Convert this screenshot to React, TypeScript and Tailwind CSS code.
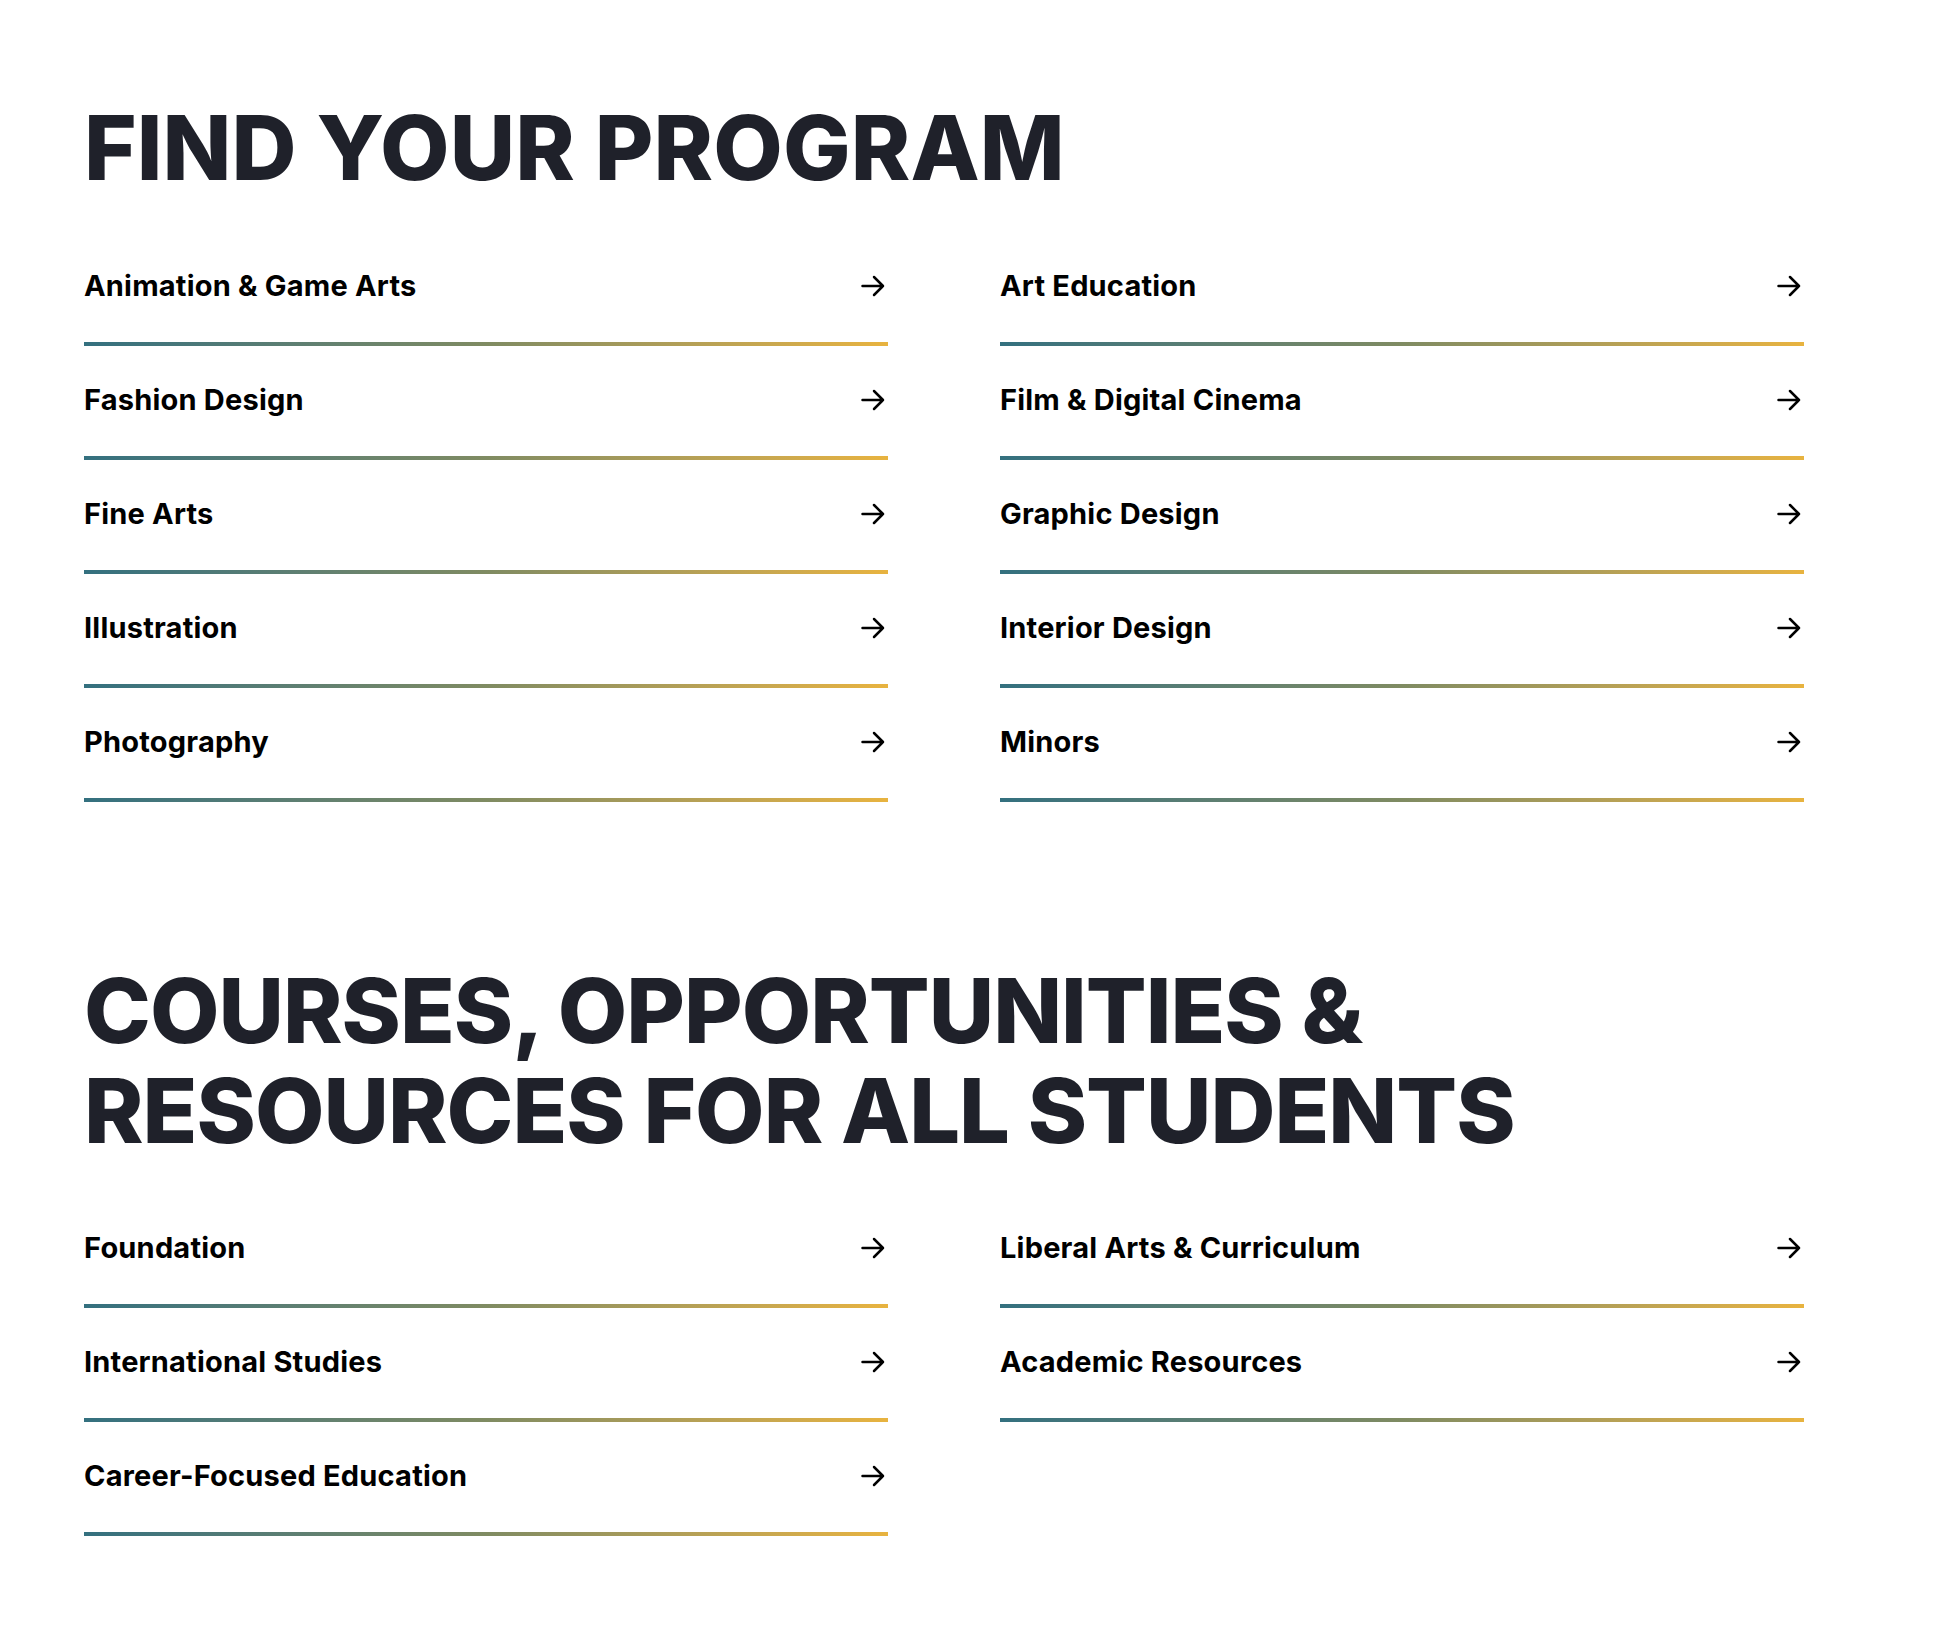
import React from 'react';

type Item = { label: string; href: string };

const programs: Item[] = [
  { label: 'Animation & Game Arts', href: '#' },
  { label: 'Art Education', href: '#' },
  { label: 'Fashion Design', href: '#' },
  { label: 'Film & Digital Cinema', href: '#' },
  { label: 'Fine Arts', href: '#' },
  { label: 'Graphic Design', href: '#' },
  { label: 'Illustration', href: '#' },
  { label: 'Interior Design', href: '#' },
  { label: 'Photography', href: '#' },
  { label: 'Minors', href: '#' },
];

const resources: Item[] = [
  { label: 'Foundation', href: '#' },
  { label: 'Liberal Arts & Curriculum', href: '#' },
  { label: 'International Studies', href: '#' },
  { label: 'Academic Resources', href: '#' },
  { label: 'Career-Focused Education', href: '#' },
];

const Arrow = () => (
  <svg width="24" height="22" viewBox="0 0 24 22" fill="none" className="shrink-0">
    <path
      d="M1.5 11H22M13 2l9 9-9 9"
      stroke="#000"
      strokeWidth="2.5"
      strokeLinecap="round"
      strokeLinejoin="round"
    />
  </svg>
);

const LinkRow = ({ item }: { item: Item }) => (
  <a href={item.href} className="flex flex-col group">
    <div className="flex h-[110px] items-center justify-between pb-[3px] pr-[3px]">
      <span className="text-[29px] font-bold tracking-[0.2px] text-black">{item.label}</span>
      <Arrow />
    </div>
    {/* gradient rule under each link */}
    <div className="h-[4px] w-full bg-gradient-to-r from-[#33707f] via-[#7f8b62] to-[#e8b33f]" />
  </a>
);

const Section = ({ title, items, headingClass }: { title: React.ReactNode; items: Item[]; headingClass: string }) => (
  <section>
    <h2 className={headingClass}>{title}</h2>
    <div className="grid w-[1720px] grid-cols-2 gap-x-[112px]">
      {items.map((item) => (
        <LinkRow key={item.label} item={item} />
      ))}
    </div>
  </section>
);

export default function App() {
  return (
    <div
      className="min-h-[1640px] bg-white px-[84px] pt-[103px] pb-[104px]"
      style={{ fontFamily: 'Inter, "Liberation Sans", sans-serif' }}
    >
      <Section
        title="FIND YOUR PROGRAM"
        items={programs}
        headingClass="mb-[39px] text-[90px] font-extrabold leading-none tracking-[0.1px] text-[#1f212a]"
      />
      <div className="mt-[159px]">
        <Section
          title={
            <>
              COURSES, OPPORTUNITIES &amp;
              <br />
              RESOURCES FOR ALL STUDENTS
            </>
          }
          items={resources}
          headingClass="mb-[33px] text-[90px] font-extrabold leading-[100px] tracking-[-1px] text-[#1f212a]"
        />
      </div>
    </div>
  );
}
